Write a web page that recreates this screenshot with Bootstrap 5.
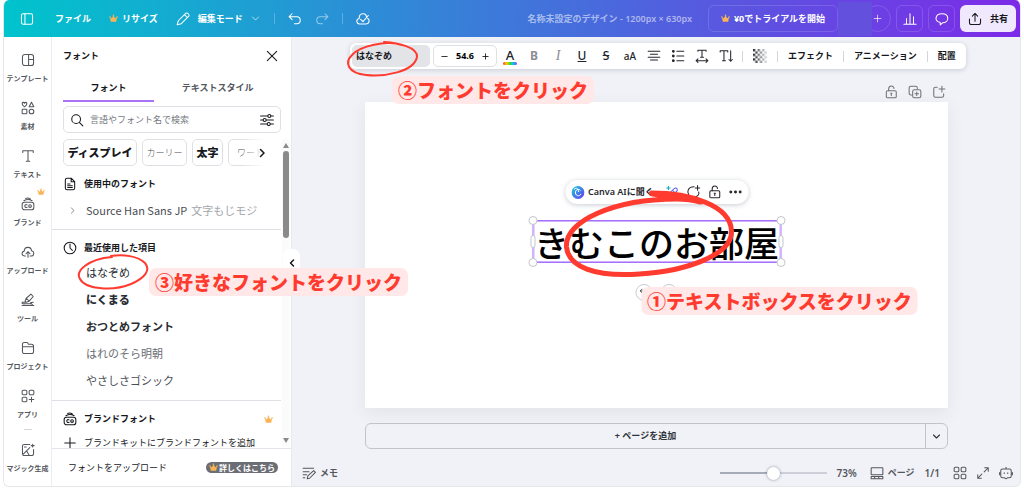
<!DOCTYPE html>
<html lang="ja">
<head>
<meta charset="utf-8">
<meta name="viewport" content="width=device-width, initial-scale=1">
<title>名称未設定のデザイン</title>
<link rel="stylesheet" href="https://cdn.jsdelivr.net/npm/bootstrap@5.3.0/dist/css/bootstrap.min.css">
<style>
body{font-family:"Noto Sans","Noto Sans CJK JP",sans-serif;font-size:9px;line-height:14px;color:#16181d;background:#fff}
button{font:inherit;color:inherit;background:none;border:0;padding:0}
a{color:inherit;text-decoration:none}
svg{flex:none;display:block}
.ic{width:14px;height:14px;fill:none;stroke:currentColor;stroke-width:1.8;stroke-linecap:round;stroke-linejoin:round}
.ic-s{width:9px;height:9px}
.ic-bold{stroke-width:3}
.crown{width:9px;height:9px;fill:#f8b455}
.shell{margin:0 3px;height:calc(100vh - 1px);border:1px solid #e6e7ea;border-top:0;border-radius:6px;overflow:hidden;background:#f1f2f7}
/* header */
.topbar{height:37px;flex:none;background:linear-gradient(92deg,#00c4cc,#7d2ae8);color:#fff;font-weight:700;padding:0 4px 0 16px}
.topbar .vr,.tools .vr{width:1px;height:11px;min-height:0;align-self:center;opacity:.25}
.file-menu{gap:18px;margin-left:21px}
.history{gap:13px;margin-left:14px}
.doc-title{color:rgba(255,255,255,.55);font-weight:600}
.ghost{border:1px solid rgba(255,255,255,.14);border-radius:6px;height:27px;min-width:27px;display:flex;align-items:center;justify-content:center}
.trial{width:130px}
.actions{gap:5px}
.plus-btn{border-radius:14px;margin-left:-8px}
.blank{width:34px;height:34px;background:#6350dd;position:relative;z-index:1}
.share{background:#f0e8fd;color:#16181d;height:27px;width:56px;border-radius:6px;gap:8px}
/* rail */
.rail{width:48px;flex:none;background:#fff;border-right:1px solid #ebecf0;padding-top:16px;gap:17px;color:#54575d}
.rail button{display:flex;flex-direction:column;align-items:center;gap:7px;font-size:7px;line-height:10px;font-weight:700;white-space:nowrap;position:relative}
.rail .crown{position:absolute;right:6px;top:-9px;width:8px;height:8px}
.rail hr{width:8px;margin:-8px auto -4px;opacity:1;border-color:#d5d7dd}
/* panel */
.side{width:240px;flex:none;background:#fff;border-right:1px solid #e9eaee;position:relative}
.inset{padding-left:11px;padding-right:10px}
.panel-head{padding-top:12px;padding-right:12px}
.tab-row{padding-top:15px}
.font-tabs{height:23px}
.font-tabs .nav-link{padding:3px 0 6px;font-weight:700;color:#54575d;border-bottom:1px solid transparent;line-height:14px}
.font-tabs .nav-link.active{color:#16181d;border-bottom:2px solid #ab72fa;padding-bottom:5px}
.search{height:27px;border:1px solid #dfe0e5;border-radius:5px;padding:0 6px;margin-top:5px}
.search input{border:0;outline:0;font:inherit;min-width:0;background:none}
.search input::placeholder{color:#76797f;opacity:1}
.scroll-area{overflow:hidden;min-height:0;margin-top:6px}
.chip{height:27px;border:1px solid #dfe0e5;border-radius:5px;flex:none;white-space:nowrap;width:45px}
.chip.heavy{font-weight:900;font-size:11px;width:74px}
.chip.short{width:31px}
.chip.thin{font-family:"Noto Sans CJK JP",sans-serif;font-weight:300;color:#4b4e54}
.chips{gap:5px;width:208px;overflow:hidden;position:relative;margin-left:11px}
.chips::after{content:"";position:absolute;right:0;top:0;width:30px;height:27px;background:linear-gradient(90deg,transparent,#fff 80%)}
.chips .next{position:absolute;right:3px;top:7px;z-index:1}
.font-sec{border-bottom:1px solid #dfe0e6;margin-right:10px}
.font-sec h2{font-size:9px;line-height:14px;font-weight:700;margin:0;padding-left:11px;gap:7px;display:flex;align-items:center}
.in-use{padding:11px 0 12px}
.in-use button{font-size:11px;padding:12px 0 0 16px;gap:9px;font-family:"Noto Sans CJK JP",sans-serif;color:#4b4e54}
.in-use em{font-style:normal;color:#a3a6ac;margin-left:4px}
.fonts{padding:11px 0 0}
.fonts h2{margin-bottom:10px}
.fonts button{display:block;font-size:11px;line-height:16px;padding-left:34px;margin-bottom:11px;color:#2a2d33}
.brand-sec{padding-top:11px}
.brand-sec .inset{gap:7px}
.bar{position:absolute;right:1px;top:102px;bottom:39px;width:8px;background:#fbfbfc}
.bar i{position:absolute;left:1px;top:12px;width:6px;height:87px;border-radius:3px;background:#8a8a8a}
.bar svg{position:absolute;left:1px;width:6px;height:5px;fill:#8a8a8a}
.upload{height:38px;border-top:1px solid #e4e5ea;flex:none;padding:0 13px 0 16px}
.learn{background:#6b6e75;color:#fff;border-radius:6px;height:11px;padding:0 3px;font-size:8px;font-weight:700;line-height:11px;display:flex;align-items:center;gap:1px}
.handle{position:absolute;right:-9px;top:212px;width:17px;height:28px;background:#fff;border-radius:7px;z-index:2}
/* stage */
.stage{min-width:0}
.tools{height:26px;background:#fff;border-radius:6px;box-shadow:0 1px 5px rgba(40,50,80,.2);margin:6px 54px 0 58px;padding:2px 9px 2px 2px;font-weight:700;position:relative;white-space:nowrap}
.tools .ib{width:24px;height:22px;display:flex;align-items:center;justify-content:center;flex:none;font-size:12px;font-weight:500;color:#24272c}
.tools .off{color:#8c8f95}
.tools .vr{opacity:.18}
.swatch{width:14px;height:3px;border-radius:2px;background:linear-gradient(90deg,#f33,#fc0,#3d3,#0bf,#a3f)}
.pick{width:78px;background:#e3e4e8;border-radius:5px;text-align:left;padding-left:4px;flex:none}
.size-box{border:1px solid #dfe0e5;border-radius:5px;width:64px;margin:0 1px 0 3px;padding:0 7px;flex:none}
.size-box input{width:26px;border:0;padding:0;text-align:center;font:inherit;outline:0;background:none}
.size-box .ic{width:7px;height:7px}
.text-tools{gap:10px;padding-left:4px}
.page-actions{color:#707379;padding:13px 74px 0 73px;gap:10px;height:33px}
.sheet{margin:0 72px 0 73px;aspect-ratio:1200/630;background:#fff;box-shadow:0 5px 16px rgba(50,60,90,.08);position:relative}
.cluster{position:absolute;left:50%;top:78px;transform:translateX(-50%);display:flex;flex-direction:column;align-items:center}
.float-bar{height:24px;border-radius:12px;background:#fff;box-shadow:0 1px 5px rgba(40,50,80,.25);padding:0 4px 0 6px;gap:7px;width:183px;font-weight:600;white-space:nowrap;color:#24272c}
.ask{width:70px;text-align:left;margin-left:-3px}
.text-box{margin-top:16px;border:1px solid #a570ff;outline:1px solid #cdb0fb;outline-offset:-2px;font-family:"Noto Sans CJK JP",sans-serif;font-size:35px;line-height:41px;font-weight:500;color:#000;position:relative;padding:0 1px;white-space:nowrap}
.knob{position:absolute;width:9px;height:9px;border:1px solid #c3c5cc;border-radius:50%;background:#fff}
.knob.pill{width:5px;height:13px;border-radius:3px}
.l{left:-5px}.r{right:-5px}.pill.l{left:-3px}.pill.r{right:-3px}.t{top:-5px}.b{bottom:-5px}.m{top:14px}
.rounds{margin-top:21px}
.round{width:17px;height:17px;border-radius:50%;border:1px solid #c9cbd1;background:#fff;display:flex;align-items:center;justify-content:center}
.add-page{margin:15px 72px 0 73px;height:26px;border:1px solid #c2c4ca;border-radius:6px;font-weight:700;color:#2f3238}
.add-page .more{width:22px;border-left:1px solid #c2c4ca}
.status{height:26px;padding:0 7px 0 10px;color:#54575d;font-weight:600}
.status .num{font-size:10px;margin:0 13px 0 10px}
.view-icons{gap:9px}
.zoom{appearance:none;width:107px;height:14px;background:linear-gradient(90deg,#a5abb7 50%,#cdd0d8 50%) center/100% 2px no-repeat;margin:0}
.zoom::-webkit-slider-thumb{appearance:none;width:13px;height:13px;border-radius:50%;background:#fff;box-shadow:0 0 3px rgba(40,50,80,.5)}
/* step call-outs */
.step{position:absolute;z-index:5;background:#ffe8e7;color:#ff3b30;font-family:"Noto Sans CJK JP",sans-serif;font-size:19px;line-height:28px;font-weight:900;padding:0 6px;border-radius:7px;white-space:nowrap}
.ring{position:absolute;z-index:4;fill:none;stroke:#ff3b30;stroke-linecap:round;overflow:visible;pointer-events:none}
.step1{left:109px;top:107px}.step2{left:42px;top:33px}.step3{left:97px;top:231px}
.ring1{left:32px;top:11px;width:170px;height:88px}.ring2{left:-2px;top:-2px;width:70px;height:36px}.ring3{left:26px;top:218px;width:71px;height:35px}
</style>
</head>
<body>
<svg width="0" height="0" class="position-absolute" aria-hidden="true">
<symbol id="crown" viewBox="0 0 20 18"><path d="M2 5.500l4.300 3L10 1.500l3.700 7 4.300-3L16 16H4z"/><circle cx="2" cy="5.500" r="1.700"/><circle cx="10" cy="2" r="1.700"/><circle cx="18" cy="5.500" r="1.700"/></symbol>
<symbol id="panel" viewBox="0 0 24 24"><rect x="2.500" y="3" width="19" height="18" rx="3"/><path d="M8.500 3v18"/></symbol>
<symbol id="template" viewBox="0 0 24 24"><rect x="2.500" y="2.500" width="19" height="19" rx="4"/><path d="M13 2.500v19M13 11h8.500"/></symbol>
<symbol id="shapes" viewBox="0 0 24 24"><path d="M6 10C2.500 7.500 2 6 2 4.700 2 2 5 1.500 6 3.800 7 1.500 10 2 10 4.700 10 6 9.500 7.500 6 10zM18 2l4 8h-8z"/><rect x="2" y="14" width="8" height="8" rx="1"/><circle cx="18" cy="18" r="4"/></symbol>
<symbol id="tee" viewBox="0 0 24 24"><path d="M3 6V3h18v3M12 3v18M9 21h6"/></symbol>
<symbol id="brand" viewBox="0 0 24 24"><rect x="2" y="9" width="20" height="13" rx="4"/><path d="M5 6.500C9 4 15 4 19 6.500M8 2.500c3-1.500 6-.5 8 1M10.500 13.500C8 12.500 6.500 13.500 6.500 15.500s1.500 3 4 2"/><circle cx="15.500" cy="15.500" r="2.300"/></symbol>
<symbol id="upload" viewBox="0 0 24 24"><path d="M7.500 19H6c-5.500-.5-5.500-7.500-.5-8.500C6 2 17.500 2 18 10c5.500 1 5 9-1 9h-1.500M12 21v-9M8.500 15l3.500-3.500 3.500 3.500"/></symbol>
<symbol id="tool" viewBox="0 0 24 24"><path d="M7 14l2-5 8-7 4 4-7 8-5 2zM9 9l5 5M2 16h6M21 16c-5 0-6 1-3 2.500M2 21.500h20M2 16v2c0 2 18-2 18 3"/></symbol>
<symbol id="folder" viewBox="0 0 24 24"><path d="M2.500 18V6q0-3.500 3.500-3.500h4q1.500 0 2 1.500l.5 1.500H18q3.500 0 3.500 3.500v9q0 3.500-3.500 3.500H6q-3.500 0-3.500-3.500zM2.500 10h19"/></symbol>
<symbol id="apps" viewBox="0 0 24 24"><rect x="2" y="2" width="8" height="8" rx="2"/><rect x="14" y="2" width="8" height="8" rx="2"/><rect x="2" y="14" width="8" height="8" rx="2"/><path d="M18 14v8M14 18h8"/></symbol>
<symbol id="grid" viewBox="0 0 24 24"><rect x="2" y="2" width="8" height="8" rx="2"/><rect x="14" y="2" width="8" height="8" rx="2"/><rect x="2" y="14" width="8" height="8" rx="2"/><rect x="14" y="14" width="8" height="8" rx="2"/></symbol>
<symbol id="magic" viewBox="0 0 24 24"><path d="M15 2.500H6Q2.500 2.500 2.500 6v12q0 3.500 3.500 3.500h12q3.500 0 3.500-3.500v-7M3 20L15 8M14 21l-4-7M20 2v5M17.500 4.500h5M6 7h3"/></symbol>
<symbol id="pencil" viewBox="0 0 24 24"><path d="M2 22l2-7L17 2q2-1 4 1t1 4L9 20zM15 5l4 4"/></symbol>
<symbol id="down" viewBox="0 0 24 24"><path d="M4 8l8 8 8-8"/></symbol>
<symbol id="right" viewBox="0 0 24 24"><path d="M9 5l7 7-7 7"/></symbol>
<symbol id="left" viewBox="0 0 24 24"><path d="M15 6l-6 6 6 6"/></symbol>
<symbol id="undo" viewBox="0 0 24 24"><path d="M7 3L2 8l5 5M2 8h13q6 0 6 6t-6 6h-4"/></symbol>
<symbol id="redo" viewBox="0 0 24 24"><path d="M17 3l5 5-5 5M22 8H9q-6 0-6 6t6 6h4"/></symbol>
<symbol id="cloud" viewBox="0 0 24 24"><path d="M6 20.500c-6-.5-6-8.500-.5-9.500C5 1 17 1 18 8M20 11c4 2 3 9.500-3 9.500H6M8 12.500l4 4L21 6"/></symbol>
<symbol id="plus" viewBox="0 0 24 24"><path d="M12 3v18M3 12h18"/></symbol>
<symbol id="minus" viewBox="0 0 24 24"><path d="M3 12h18"/></symbol>
<symbol id="chart" viewBox="0 0 24 24"><path d="M1.500 21h21M6 21V11M12 21V3M18 21V8"/></symbol>
<symbol id="bubble" viewBox="0 0 24 24"><path d="M12 3c13 0 13 15 1 15.500L9 22v-4C-2 15.500 0 3 12 3z"/></symbol>
<symbol id="share" viewBox="0 0 24 24"><path d="M2.500 12v6q0 3.500 3.500 3.500h12q3.500 0 3.500-3.500v-6M12 16V2.500M7.500 7L12 2.500 16.500 7"/></symbol>
<symbol id="close" viewBox="0 0 24 24"><path d="M4 4l16 16M20 4L4 20"/></symbol>
<symbol id="search" viewBox="0 0 24 24"><circle cx="10.500" cy="10.500" r="7.500"/><path d="M16 16l6 6"/></symbol>
<symbol id="sliders" viewBox="0 0 24 24"><path d="M1 5h12M19 5h4M1 12h4M11 12h12M1 19h11M18 19h5"/><circle cx="16" cy="5" r="2.600"/><circle cx="8" cy="12" r="2.600"/><circle cx="15" cy="19" r="2.600"/></symbol>
<symbol id="doc" viewBox="0 0 24 24"><path d="M14 2H7Q4 2 4 5v14q0 3 3 3h10q3 0 3-3V8zv6h6M8 12h4M8 15h8M8 18h8"/></symbol>
<symbol id="clock" viewBox="0 0 24 24"><circle cx="12" cy="12" r="10"/><path d="M12 5v7l4 4"/></symbol>
<symbol id="align" viewBox="0 0 24 24"><path d="M2 4h20M6 9h12M2 14h20M6 19h12"/></symbol>
<symbol id="list" viewBox="0 0 24 24"><path d="M10 4h12M10 12h12M10 20h12"/><g fill="currentColor"><circle cx="4" cy="4" r="1.500"/><circle cx="4" cy="12" r="1.500"/><circle cx="4" cy="20" r="1.500"/></g></symbol>
<symbol id="spacing" viewBox="0 0 24 24"><path d="M5 4V2h14v2M12 2v12M9.500 14h5M2 20h20M5 17l-3 3 3 3M19 17l3 3-3 3"/></symbol>
<symbol id="vertical" viewBox="0 0 24 24"><path d="M2 5V3h13v2M8.500 3v17M6 20h5M20 3v18M17 18l3 3 3-3"/></symbol>
<symbol id="lock" viewBox="0 0 24 24"><rect x="4" y="10" width="17" height="12" rx="2"/><path d="M8 10V7c0-7 9-7 9-1M12.500 14v4M11.500 14h2"/></symbol>
<symbol id="copy" viewBox="0 0 24 24"><path d="M6 17H5q-3 0-3-3V5q0-3 3-3h8q3 0 3 3v1"/><rect x="8" y="8" width="14" height="14" rx="3"/><path d="M15 12v6M12 15h6"/></symbol>
<symbol id="newpage" viewBox="0 0 24 24"><path d="M9 4H6Q3 4 3 7v11q0 3 3 3h11q3 0 3-3v-3M17 2v10M12 7h10"/></symbol>
<symbol id="memo" viewBox="0 0 24 24"><path d="M2 4h18M2 10h10M2 15h6M2 20h3M9 22l1-5L20 8l3 3-10 10z"/></symbol>
<symbol id="pages" viewBox="0 0 24 24"><rect x="2" y="3" width="20" height="12" rx="1"/><path d="M2 18v4h20v-4zM8 18v4M15 18v4"/></symbol>
<symbol id="expand" viewBox="0 0 24 24"><path d="M15 3h6v6M21 3l-7 7M9 21H3v-6M3 21l7-7"/></symbol>
<symbol id="bot" viewBox="0 0 24 24"><path d="M6 5h12q3 0 3 3v9q0 3-3 3h-3l-3 2-3-2H6q-3 0-3-3V8q0-3 3-3zM12 5V2M1 11v4M23 11v4M9 11.500v1.500M15 11.500v1.500"/></symbol>
<symbol id="wand" viewBox="0 0 24 24"><path d="M4 20q0-4 3-6l8-8q4-2 5 1t-2 5L10 19q-3 2-6 1zM12 9l5 5"/><path d="M5 2v6M2 5h6" stroke="#18a8c8"/></symbol>
<symbol id="comment" viewBox="0 0 24 24"><path d="M13 3C3 3 0 11 4 17l-1 4h9c8 0 10-6 9-9M19 1v8M15 5h8"/></symbol>
<symbol id="dots" viewBox="0 0 24 24"><g fill="currentColor"><circle cx="4" cy="12" r="1.600"/><circle cx="12" cy="12" r="1.600"/><circle cx="20" cy="12" r="1.600"/></g></symbol>
<pattern id="chk" width="8" height="8" patternUnits="userSpaceOnUse"><path fill="#24272c" d="M0 0h4v4H0zM4 4h4v4H4z"/></pattern>
<linearGradient id="fade"><stop stop-color="#fff"/><stop offset="1" stop-color="#222"/></linearGradient>
<mask id="fm"><rect width="24" height="24" fill="url(#fade)"/></mask>
<symbol id="checker" viewBox="0 0 24 24"><rect width="24" height="24" fill="url(#chk)" stroke="none" mask="url(#fm)"/></symbol>
</svg>

<div class="shell d-flex flex-column">
<header class="topbar d-flex align-items-center">
  <button aria-label="サイドバー"><svg class="ic"><use href="#panel"/></svg></button>
  <div class="file-menu d-flex align-items-center">
    <button>ファイル</button>
    <button class="d-flex align-items-center gap-1"><svg class="crown"><use href="#crown"/></svg>リサイズ</button>
    <button class="d-flex align-items-center gap-2"><svg class="ic"><use href="#pencil"/></svg>編集モード<svg class="ic ic-s"><use href="#down"/></svg></button>
  </div>
  <div class="history d-flex align-items-center me-auto">
    <span class="vr"></span>
    <button aria-label="元に戻す"><svg class="ic"><use href="#undo"/></svg></button>
    <button aria-label="やり直す" class="opacity-50"><svg class="ic"><use href="#redo"/></svg></button>
    <span class="vr"></span>
    <button aria-label="保存済み"><svg class="ic"><use href="#cloud"/></svg></button>
  </div>
  <span class="doc-title me-3">名称未設定のデザイン - 1200px × 630px</span>
  <button class="ghost trial gap-1"><svg class="crown"><use href="#crown"/></svg>¥0でトライアルを開始</button>
  <span class="blank"></span>
  <div class="actions d-flex">
    <button class="ghost plus-btn" aria-label="追加"><svg class="ic ic-s"><use href="#plus"/></svg></button>
    <button class="ghost" aria-label="分析"><svg class="ic"><use href="#chart"/></svg></button>
    <button class="ghost" aria-label="コメント"><svg class="ic"><use href="#bubble"/></svg></button>
    <button class="share d-flex align-items-center justify-content-center"><svg class="ic"><use href="#share"/></svg>共有</button>
  </div>
</header>

<div class="d-flex flex-grow-1" style="min-height:0">
<nav class="rail d-flex flex-column">
  <button><svg class="ic"><use href="#template"/></svg>テンプレート</button>
  <button><svg class="ic"><use href="#shapes"/></svg>素材</button>
  <button><svg class="ic"><use href="#tee"/></svg>テキスト</button>
  <button><svg class="crown"><use href="#crown"/></svg><svg class="ic"><use href="#brand"/></svg>ブランド</button>
  <button><svg class="ic"><use href="#upload"/></svg>アップロード</button>
  <button><svg class="ic"><use href="#tool"/></svg>ツール</button>
  <button><svg class="ic"><use href="#folder"/></svg>プロジェクト</button>
  <button><svg class="ic"><use href="#apps"/></svg>アプリ</button>
  <hr>
  <button><svg class="ic"><use href="#magic"/></svg>マジック生成</button>
</nav>

<aside class="side d-flex flex-column">
  <div class="inset panel-head d-flex justify-content-between align-items-center">
    <strong>フォント</strong><button aria-label="閉じる"><svg class="ic"><use href="#close"/></svg></button>
  </div>
  <div class="inset tab-row">
    <div class="nav nav-fill font-tabs">
      <button class="nav-item nav-link active">フォント</button>
      <button class="nav-item nav-link">テキストスタイル</button>
    </div>
  </div>
  <div class="inset">
    <label class="search d-flex align-items-center gap-1"><svg class="ic"><use href="#search"/></svg><input class="flex-grow-1" type="search" placeholder="言語やフォント名で検索" aria-label="フォントを検索"><svg class="ic"><use href="#sliders"/></svg></label>
  </div>
  <div class="scroll-area flex-grow-1">
    <div class="chips d-flex">
      <button class="chip heavy">ディスプレイ</button>
      <button class="chip thin">カーリー</button>
      <button class="chip heavy short">太字</button>
      <button class="chip thin">ワード</button>
      <button class="next" aria-label="次へ"><svg class="ic ic-bold" style="width:12px"><use href="#right"/></svg></button>
    </div>
    <section class="font-sec in-use">
      <h2><svg class="ic"><use href="#doc"/></svg>使用中のフォント</h2>
      <button class="d-flex align-items-center"><svg class="ic ic-s"><use href="#right"/></svg><span>Source Han Sans JP<em>文字もじモジ</em></span></button>
    </section>
    <section class="font-sec fonts">
      <h2><svg class="ic"><use href="#clock"/></svg>最近使用した項目</h2>
      <button>はなぞめ</button>
      <button style="font-weight:900">にくまる</button>
      <button style="font-weight:700">おつとめフォント</button>
      <button style="color:#6a6d72">はれのそら明朝</button>
      <button style="color:#4b4e54">やさしさゴシック</button>
    </section>
    <section class="brand-sec">
      <div class="d-flex align-items-center fw-bold inset"><svg class="ic"><use href="#brand"/></svg>ブランドフォント<svg class="crown ms-auto me-2"><use href="#crown"/></svg></div>
      <button class="d-flex align-items-center inset" style="padding-top:10px"><svg class="ic"><use href="#plus"/></svg>ブランドキットにブランドフォントを追加</button>
    </section>
  </div>
  <div class="bar"><svg viewBox="0 0 6 5" style="top:4px"><path d="M3 0l3 5H0z"/></svg><i></i><svg viewBox="0 0 6 5" style="bottom:4px"><path d="M0 0h6L3 5z"/></svg></div>
  <div class="upload d-flex align-items-center justify-content-between"><button>フォントをアップロード</button><a href="#" class="learn"><svg class="crown"><use href="#crown"/></svg>詳しくはこちら</a></div>
  <button class="handle d-flex align-items-center justify-content-center" aria-label="パネルを閉じる"><svg class="ic ic-bold" style="width:12px"><use href="#left"/></svg></button>
  <svg class="ring ring3" viewBox="0 0 71 35" stroke-width="2"><path d="M34 2C10 4-3 16 2 24c6 11 34 12 51 5 14-6 20-14 14-21C60 1 45-1 33 1"/></svg>
  <div class="step step3">③好きなフォントをクリック</div>
</aside>

<main class="stage flex-grow-1 d-flex flex-column">
  <div class="tools d-flex">
    <button class="pick">はなぞめ</button>
    <div class="size-box d-flex align-items-center justify-content-between">
      <button aria-label="小さく"><svg class="ic ic-bold"><use href="#minus"/></svg></button><input value="54.6" aria-label="フォントサイズ"><button aria-label="大きく"><svg class="ic ic-bold"><use href="#plus"/></svg></button>
    </div>
    <button class="ib flex-column" aria-label="文字色"><span style="font-size:13px">A</span><span class="swatch"></span></button>
    <button class="ib off" style="font-weight:700">B</button>
    <button class="ib off" style="font:italic 14px 'Liberation Serif',serif">I</button>
    <button class="ib"><u>U</u></button>
    <button class="ib"><s>S</s></button>
    <button class="ib" style="font-size:10px">aA</button>
    <button class="ib" aria-label="配置揃え"><svg class="ic"><use href="#align"/></svg></button>
    <button class="ib" aria-label="リスト"><svg class="ic"><use href="#list"/></svg></button>
    <button class="ib" aria-label="間隔"><svg class="ic"><use href="#spacing"/></svg></button>
    <button class="ib" aria-label="縦書き"><svg class="ic"><use href="#vertical"/></svg></button>
    <div class="text-tools d-flex">
      <span class="vr"></span><button aria-label="透明度"><svg class="ic"><use href="#checker"/></svg></button><span class="vr"></span>
      <button>エフェクト</button><span class="vr"></span><button>アニメーション</button><span class="vr"></span><button>配置</button>
    </div>
    <svg class="ring ring2" viewBox="0 0 70 36" stroke-width="2"><path d="M36 1c14 1 34 5 33 15C66 31 36 36 18 34 0 32-4 22 4 14 12 5 38-1 54 4"/></svg>
    <div class="step step2">②フォントをクリック</div>
  </div>
  <div class="page-actions d-flex justify-content-end">
    <button aria-label="ロック"><svg class="ic"><use href="#lock"/></svg></button>
    <button aria-label="複製"><svg class="ic"><use href="#copy"/></svg></button>
    <button aria-label="ページを追加"><svg class="ic"><use href="#newpage"/></svg></button>
  </div>
  <div class="sheet">
    <div class="cluster">
      <div class="float-bar d-flex align-items-center">
        <svg width="13" height="13" viewBox="0 0 26 26"><defs><linearGradient id="ai" x2="1" y2="1"><stop stop-color="#15d0e0"/><stop offset="1" stop-color="#6a35ef"/></linearGradient></defs><circle cx="13" cy="13" r="13" fill="url(#ai)"/><path d="M18 9c-4-5-11-1-10 5 1 7 8 7 11 2M5 7c5-5 9-2 9 5" fill="none" stroke="#fff" stroke-width="2"/></svg>
        <button class="ask">Canva AIに聞く</button>
        <button aria-label="マジック"><svg class="ic" style="color:#5b5fe0"><use href="#wand"/></svg></button>
        <button aria-label="コメント"><svg class="ic"><use href="#comment"/></svg></button>
        <button aria-label="ロック"><svg class="ic"><use href="#lock"/></svg></button>
        <button aria-label="その他"><svg class="ic"><use href="#dots"/></svg></button>
      </div>
      <div class="text-box">きむこのお部屋<i class="knob l t"></i><i class="knob r t"></i><i class="knob l b"></i><i class="knob r b"></i><i class="knob pill l m"></i><i class="knob pill r m"></i></div>
      <div class="rounds d-flex gap-2"><button class="round" aria-label="回転"><svg class="ic ic-s"><use href="#undo"/></svg></button><button class="round" aria-label="移動"><svg class="ic ic-s"><use href="#plus"/></svg></button></div>
      <svg class="ring ring1" viewBox="0 0 170 88" stroke-width="5"><path d="M88 3L110 6M87 2C125 2 166 14 167 40c1 24-45 40-92 43C30 86 4 76 2 56 0 30 50 8 112 8c10 0 17 1 24 3"/></svg>
      <div class="step step1">①テキストボックスをクリック</div>
    </div>
  </div>
  <div class="add-page d-flex"><button class="flex-grow-1">+ ページを追加</button><button class="more d-flex align-items-center justify-content-center" aria-label="ページの種類"><svg class="ic ic-s ic-bold"><use href="#down"/></svg></button></div>
  <footer class="status d-flex align-items-center mt-auto">
    <button class="d-flex align-items-center gap-1 me-auto"><svg class="ic"><use href="#memo"/></svg>メモ</button>
    <input class="zoom" type="range" min="0" max="100" value="50" aria-label="ズーム">
    <span class="num">73%</span>
    <button class="d-flex align-items-center gap-1"><svg class="ic"><use href="#pages"/></svg>ページ</button>
    <span class="num">1/1</span>
    <div class="view-icons d-flex"><button aria-label="グリッド"><svg class="ic"><use href="#grid"/></svg></button>
    <button aria-label="全画面"><svg class="ic"><use href="#expand"/></svg></button>
    <button aria-label="アシスタント"><svg class="ic"><use href="#bot"/></svg></button></div>
  </footer>
</main>
</div>
</div>
<script src="https://cdn.jsdelivr.net/npm/bootstrap@5.3.0/dist/js/bootstrap.bundle.min.js"></script>
</body>
</html>
